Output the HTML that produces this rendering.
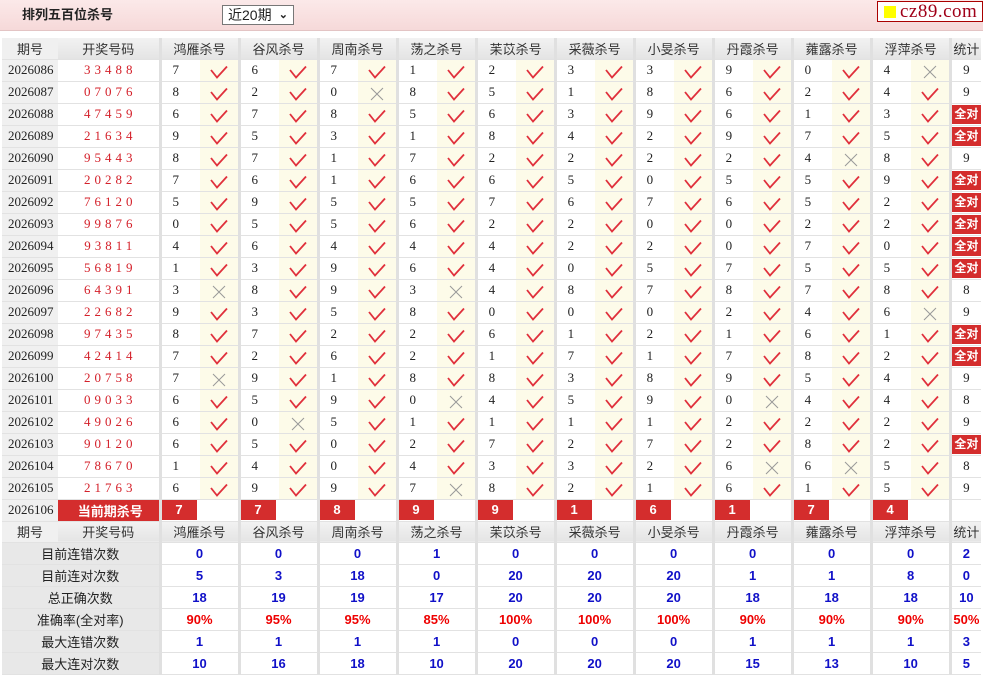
<!DOCTYPE html>
<html><head><meta charset="utf-8"><style>
*{margin:0;padding:0;box-sizing:border-box}
body{width:983px;height:677px;background:#fff;position:relative;overflow:hidden;font-family:"Liberation Sans","Noto Sans CJK SC",sans-serif;font-size:13px;color:#222}
.top{position:absolute;left:0;top:0;width:983px;height:31px;background:linear-gradient(#fbe9e9,#f6d9d9);border-bottom:1px solid #e3c4c4}
.ttl{position:absolute;left:22px;top:6px;font-weight:bold;font-size:13px;color:#222;line-height:18px}
.sel{position:absolute;left:222px;top:5px;width:72px;height:20px;border:1px solid #777;background:#fff;font-size:14px;padding-left:5px;line-height:18px}
.sel b{position:absolute;right:5px;top:0;font-size:11px}
.logo{position:absolute;left:877px;top:1px;width:106px;height:21px;background:#fff;border:1px solid #a00;font-family:"Liberation Serif",serif;font-size:19px;color:#a00018;line-height:19px;padding-left:22px;letter-spacing:0.5px}
.logo i{position:absolute;left:6px;top:4px;width:12px;height:12px;background:#ff0}
table{position:absolute;left:2px;top:38px;width:979px;border-collapse:collapse;table-layout:fixed}
td{height:22px;border-bottom:1px solid #e2e2e2;text-align:center;padding:0;white-space:nowrap;font-family:"Liberation Serif","Noto Serif CJK SC",serif;font-size:13px}
.h td{background:linear-gradient(#f2f2f2,#e4e4e4);font-family:"Liberation Sans","Noto Sans CJK SC",sans-serif;color:#333;height:21px}
td.p{background:#f0f0f0;text-align:left;padding-left:6px}
.h td.p{text-align:center;padding:0}
td.d{color:#d4202a;letter-spacing:4px;padding-left:4px}
td.n{border-left:3px solid #e0e0e0;text-align:left;padding-left:11px}
.h td.n,td.s{border-left:3px solid #e0e0e0}
td.k{background:#fdfbe9}
td.s{text-align:center}
.ok{display:inline-block;width:18px;height:14px;vertical-align:middle;margin-top:2px}
td.q span{display:inline-block;background:#d42d2d;color:#fff;font-weight:bold;font-family:"Liberation Sans","Noto Sans CJK SC",sans-serif;font-size:12px;width:29px;height:19px;line-height:19px}
tr.c td.n{padding:0}
tr.c td.n span{display:block;width:35px;height:20px;background:#d42d2d;color:#fff;font-weight:bold;text-align:center;line-height:20px;font-family:"Liberation Sans",sans-serif}
td.cur{background:#d42d2d;color:#fff;font-weight:bold;font-family:"Liberation Sans","Noto Sans CJK SC",sans-serif;letter-spacing:0}
tr.st td{font-family:"Liberation Sans",sans-serif;font-weight:bold;color:#1010c8;font-size:13px}
tr.st td.l{background:#e8e8e8;font-weight:normal;color:#222;font-family:"Liberation Sans","Noto Sans CJK SC",sans-serif}
tr.st td.g{border-left:3px solid #e0e0e0}
tr.r td.g{color:#e00}
</style></head><body>
<svg width="0" height="0" style="position:absolute"><defs>
<symbol id="y" viewBox="0 0 18 14"><path d="M1 5 L7 12.5 L17 1.5" fill="none" stroke="#e0303c" stroke-width="1.8"/></symbol>
<symbol id="x" viewBox="0 0 18 14"><path d="M3 1 L15 13 M15 1 L3 13" fill="none" stroke="#999" stroke-width="1"/></symbol>
</defs></svg>
<div class="top"><div class="ttl">排列五百位杀号</div><div class="sel">近20期<b>&#8964;</b></div></div>
<div class="logo"><i></i>cz89.com</div>
<table>
<colgroup><col style="width:56px"><col style="width:102px"><col span="20" style="width:39.5px"><col style="width:31px"></colgroup>
<tr class="h"><td class="p">期号</td><td>开奖号码</td><td class="n" colspan="2" style="text-align:center;padding:0">鸿雁杀号</td><td class="n" colspan="2" style="text-align:center;padding:0">谷风杀号</td><td class="n" colspan="2" style="text-align:center;padding:0">周南杀号</td><td class="n" colspan="2" style="text-align:center;padding:0">荡之杀号</td><td class="n" colspan="2" style="text-align:center;padding:0">苿苡杀号</td><td class="n" colspan="2" style="text-align:center;padding:0">采薇杀号</td><td class="n" colspan="2" style="text-align:center;padding:0">小旻杀号</td><td class="n" colspan="2" style="text-align:center;padding:0">丹霞杀号</td><td class="n" colspan="2" style="text-align:center;padding:0">蕹露杀号</td><td class="n" colspan="2" style="text-align:center;padding:0">浮萍杀号</td><td class="s">统计</td></tr>
<tr><td class="p">2026086</td><td class="d">33488</td><td class="n">7</td><td class="k"><svg class="ok"><use href="#y"/></svg></td><td class="n">6</td><td class="k"><svg class="ok"><use href="#y"/></svg></td><td class="n">7</td><td class="k"><svg class="ok"><use href="#y"/></svg></td><td class="n">1</td><td class="k"><svg class="ok"><use href="#y"/></svg></td><td class="n">2</td><td class="k"><svg class="ok"><use href="#y"/></svg></td><td class="n">3</td><td class="k"><svg class="ok"><use href="#y"/></svg></td><td class="n">3</td><td class="k"><svg class="ok"><use href="#y"/></svg></td><td class="n">9</td><td class="k"><svg class="ok"><use href="#y"/></svg></td><td class="n">0</td><td class="k"><svg class="ok"><use href="#y"/></svg></td><td class="n">4</td><td class="k"><svg class="ok"><use href="#x"/></svg></td><td class="s">9</td></tr>
<tr><td class="p">2026087</td><td class="d">07076</td><td class="n">8</td><td class="k"><svg class="ok"><use href="#y"/></svg></td><td class="n">2</td><td class="k"><svg class="ok"><use href="#y"/></svg></td><td class="n">0</td><td class="k"><svg class="ok"><use href="#x"/></svg></td><td class="n">8</td><td class="k"><svg class="ok"><use href="#y"/></svg></td><td class="n">5</td><td class="k"><svg class="ok"><use href="#y"/></svg></td><td class="n">1</td><td class="k"><svg class="ok"><use href="#y"/></svg></td><td class="n">8</td><td class="k"><svg class="ok"><use href="#y"/></svg></td><td class="n">6</td><td class="k"><svg class="ok"><use href="#y"/></svg></td><td class="n">2</td><td class="k"><svg class="ok"><use href="#y"/></svg></td><td class="n">4</td><td class="k"><svg class="ok"><use href="#y"/></svg></td><td class="s">9</td></tr>
<tr><td class="p">2026088</td><td class="d">47459</td><td class="n">6</td><td class="k"><svg class="ok"><use href="#y"/></svg></td><td class="n">7</td><td class="k"><svg class="ok"><use href="#y"/></svg></td><td class="n">8</td><td class="k"><svg class="ok"><use href="#y"/></svg></td><td class="n">5</td><td class="k"><svg class="ok"><use href="#y"/></svg></td><td class="n">6</td><td class="k"><svg class="ok"><use href="#y"/></svg></td><td class="n">3</td><td class="k"><svg class="ok"><use href="#y"/></svg></td><td class="n">9</td><td class="k"><svg class="ok"><use href="#y"/></svg></td><td class="n">6</td><td class="k"><svg class="ok"><use href="#y"/></svg></td><td class="n">1</td><td class="k"><svg class="ok"><use href="#y"/></svg></td><td class="n">3</td><td class="k"><svg class="ok"><use href="#y"/></svg></td><td class="s q"><span>全对</span></td></tr>
<tr><td class="p">2026089</td><td class="d">21634</td><td class="n">9</td><td class="k"><svg class="ok"><use href="#y"/></svg></td><td class="n">5</td><td class="k"><svg class="ok"><use href="#y"/></svg></td><td class="n">3</td><td class="k"><svg class="ok"><use href="#y"/></svg></td><td class="n">1</td><td class="k"><svg class="ok"><use href="#y"/></svg></td><td class="n">8</td><td class="k"><svg class="ok"><use href="#y"/></svg></td><td class="n">4</td><td class="k"><svg class="ok"><use href="#y"/></svg></td><td class="n">2</td><td class="k"><svg class="ok"><use href="#y"/></svg></td><td class="n">9</td><td class="k"><svg class="ok"><use href="#y"/></svg></td><td class="n">7</td><td class="k"><svg class="ok"><use href="#y"/></svg></td><td class="n">5</td><td class="k"><svg class="ok"><use href="#y"/></svg></td><td class="s q"><span>全对</span></td></tr>
<tr><td class="p">2026090</td><td class="d">95443</td><td class="n">8</td><td class="k"><svg class="ok"><use href="#y"/></svg></td><td class="n">7</td><td class="k"><svg class="ok"><use href="#y"/></svg></td><td class="n">1</td><td class="k"><svg class="ok"><use href="#y"/></svg></td><td class="n">7</td><td class="k"><svg class="ok"><use href="#y"/></svg></td><td class="n">2</td><td class="k"><svg class="ok"><use href="#y"/></svg></td><td class="n">2</td><td class="k"><svg class="ok"><use href="#y"/></svg></td><td class="n">2</td><td class="k"><svg class="ok"><use href="#y"/></svg></td><td class="n">2</td><td class="k"><svg class="ok"><use href="#y"/></svg></td><td class="n">4</td><td class="k"><svg class="ok"><use href="#x"/></svg></td><td class="n">8</td><td class="k"><svg class="ok"><use href="#y"/></svg></td><td class="s">9</td></tr>
<tr><td class="p">2026091</td><td class="d">20282</td><td class="n">7</td><td class="k"><svg class="ok"><use href="#y"/></svg></td><td class="n">6</td><td class="k"><svg class="ok"><use href="#y"/></svg></td><td class="n">1</td><td class="k"><svg class="ok"><use href="#y"/></svg></td><td class="n">6</td><td class="k"><svg class="ok"><use href="#y"/></svg></td><td class="n">6</td><td class="k"><svg class="ok"><use href="#y"/></svg></td><td class="n">5</td><td class="k"><svg class="ok"><use href="#y"/></svg></td><td class="n">0</td><td class="k"><svg class="ok"><use href="#y"/></svg></td><td class="n">5</td><td class="k"><svg class="ok"><use href="#y"/></svg></td><td class="n">5</td><td class="k"><svg class="ok"><use href="#y"/></svg></td><td class="n">9</td><td class="k"><svg class="ok"><use href="#y"/></svg></td><td class="s q"><span>全对</span></td></tr>
<tr><td class="p">2026092</td><td class="d">76120</td><td class="n">5</td><td class="k"><svg class="ok"><use href="#y"/></svg></td><td class="n">9</td><td class="k"><svg class="ok"><use href="#y"/></svg></td><td class="n">5</td><td class="k"><svg class="ok"><use href="#y"/></svg></td><td class="n">5</td><td class="k"><svg class="ok"><use href="#y"/></svg></td><td class="n">7</td><td class="k"><svg class="ok"><use href="#y"/></svg></td><td class="n">6</td><td class="k"><svg class="ok"><use href="#y"/></svg></td><td class="n">7</td><td class="k"><svg class="ok"><use href="#y"/></svg></td><td class="n">6</td><td class="k"><svg class="ok"><use href="#y"/></svg></td><td class="n">5</td><td class="k"><svg class="ok"><use href="#y"/></svg></td><td class="n">2</td><td class="k"><svg class="ok"><use href="#y"/></svg></td><td class="s q"><span>全对</span></td></tr>
<tr><td class="p">2026093</td><td class="d">99876</td><td class="n">0</td><td class="k"><svg class="ok"><use href="#y"/></svg></td><td class="n">5</td><td class="k"><svg class="ok"><use href="#y"/></svg></td><td class="n">5</td><td class="k"><svg class="ok"><use href="#y"/></svg></td><td class="n">6</td><td class="k"><svg class="ok"><use href="#y"/></svg></td><td class="n">2</td><td class="k"><svg class="ok"><use href="#y"/></svg></td><td class="n">2</td><td class="k"><svg class="ok"><use href="#y"/></svg></td><td class="n">0</td><td class="k"><svg class="ok"><use href="#y"/></svg></td><td class="n">0</td><td class="k"><svg class="ok"><use href="#y"/></svg></td><td class="n">2</td><td class="k"><svg class="ok"><use href="#y"/></svg></td><td class="n">2</td><td class="k"><svg class="ok"><use href="#y"/></svg></td><td class="s q"><span>全对</span></td></tr>
<tr><td class="p">2026094</td><td class="d">93811</td><td class="n">4</td><td class="k"><svg class="ok"><use href="#y"/></svg></td><td class="n">6</td><td class="k"><svg class="ok"><use href="#y"/></svg></td><td class="n">4</td><td class="k"><svg class="ok"><use href="#y"/></svg></td><td class="n">4</td><td class="k"><svg class="ok"><use href="#y"/></svg></td><td class="n">4</td><td class="k"><svg class="ok"><use href="#y"/></svg></td><td class="n">2</td><td class="k"><svg class="ok"><use href="#y"/></svg></td><td class="n">2</td><td class="k"><svg class="ok"><use href="#y"/></svg></td><td class="n">0</td><td class="k"><svg class="ok"><use href="#y"/></svg></td><td class="n">7</td><td class="k"><svg class="ok"><use href="#y"/></svg></td><td class="n">0</td><td class="k"><svg class="ok"><use href="#y"/></svg></td><td class="s q"><span>全对</span></td></tr>
<tr><td class="p">2026095</td><td class="d">56819</td><td class="n">1</td><td class="k"><svg class="ok"><use href="#y"/></svg></td><td class="n">3</td><td class="k"><svg class="ok"><use href="#y"/></svg></td><td class="n">9</td><td class="k"><svg class="ok"><use href="#y"/></svg></td><td class="n">6</td><td class="k"><svg class="ok"><use href="#y"/></svg></td><td class="n">4</td><td class="k"><svg class="ok"><use href="#y"/></svg></td><td class="n">0</td><td class="k"><svg class="ok"><use href="#y"/></svg></td><td class="n">5</td><td class="k"><svg class="ok"><use href="#y"/></svg></td><td class="n">7</td><td class="k"><svg class="ok"><use href="#y"/></svg></td><td class="n">5</td><td class="k"><svg class="ok"><use href="#y"/></svg></td><td class="n">5</td><td class="k"><svg class="ok"><use href="#y"/></svg></td><td class="s q"><span>全对</span></td></tr>
<tr><td class="p">2026096</td><td class="d">64391</td><td class="n">3</td><td class="k"><svg class="ok"><use href="#x"/></svg></td><td class="n">8</td><td class="k"><svg class="ok"><use href="#y"/></svg></td><td class="n">9</td><td class="k"><svg class="ok"><use href="#y"/></svg></td><td class="n">3</td><td class="k"><svg class="ok"><use href="#x"/></svg></td><td class="n">4</td><td class="k"><svg class="ok"><use href="#y"/></svg></td><td class="n">8</td><td class="k"><svg class="ok"><use href="#y"/></svg></td><td class="n">7</td><td class="k"><svg class="ok"><use href="#y"/></svg></td><td class="n">8</td><td class="k"><svg class="ok"><use href="#y"/></svg></td><td class="n">7</td><td class="k"><svg class="ok"><use href="#y"/></svg></td><td class="n">8</td><td class="k"><svg class="ok"><use href="#y"/></svg></td><td class="s">8</td></tr>
<tr><td class="p">2026097</td><td class="d">22682</td><td class="n">9</td><td class="k"><svg class="ok"><use href="#y"/></svg></td><td class="n">3</td><td class="k"><svg class="ok"><use href="#y"/></svg></td><td class="n">5</td><td class="k"><svg class="ok"><use href="#y"/></svg></td><td class="n">8</td><td class="k"><svg class="ok"><use href="#y"/></svg></td><td class="n">0</td><td class="k"><svg class="ok"><use href="#y"/></svg></td><td class="n">0</td><td class="k"><svg class="ok"><use href="#y"/></svg></td><td class="n">0</td><td class="k"><svg class="ok"><use href="#y"/></svg></td><td class="n">2</td><td class="k"><svg class="ok"><use href="#y"/></svg></td><td class="n">4</td><td class="k"><svg class="ok"><use href="#y"/></svg></td><td class="n">6</td><td class="k"><svg class="ok"><use href="#x"/></svg></td><td class="s">9</td></tr>
<tr><td class="p">2026098</td><td class="d">97435</td><td class="n">8</td><td class="k"><svg class="ok"><use href="#y"/></svg></td><td class="n">7</td><td class="k"><svg class="ok"><use href="#y"/></svg></td><td class="n">2</td><td class="k"><svg class="ok"><use href="#y"/></svg></td><td class="n">2</td><td class="k"><svg class="ok"><use href="#y"/></svg></td><td class="n">6</td><td class="k"><svg class="ok"><use href="#y"/></svg></td><td class="n">1</td><td class="k"><svg class="ok"><use href="#y"/></svg></td><td class="n">2</td><td class="k"><svg class="ok"><use href="#y"/></svg></td><td class="n">1</td><td class="k"><svg class="ok"><use href="#y"/></svg></td><td class="n">6</td><td class="k"><svg class="ok"><use href="#y"/></svg></td><td class="n">1</td><td class="k"><svg class="ok"><use href="#y"/></svg></td><td class="s q"><span>全对</span></td></tr>
<tr><td class="p">2026099</td><td class="d">42414</td><td class="n">7</td><td class="k"><svg class="ok"><use href="#y"/></svg></td><td class="n">2</td><td class="k"><svg class="ok"><use href="#y"/></svg></td><td class="n">6</td><td class="k"><svg class="ok"><use href="#y"/></svg></td><td class="n">2</td><td class="k"><svg class="ok"><use href="#y"/></svg></td><td class="n">1</td><td class="k"><svg class="ok"><use href="#y"/></svg></td><td class="n">7</td><td class="k"><svg class="ok"><use href="#y"/></svg></td><td class="n">1</td><td class="k"><svg class="ok"><use href="#y"/></svg></td><td class="n">7</td><td class="k"><svg class="ok"><use href="#y"/></svg></td><td class="n">8</td><td class="k"><svg class="ok"><use href="#y"/></svg></td><td class="n">2</td><td class="k"><svg class="ok"><use href="#y"/></svg></td><td class="s q"><span>全对</span></td></tr>
<tr><td class="p">2026100</td><td class="d">20758</td><td class="n">7</td><td class="k"><svg class="ok"><use href="#x"/></svg></td><td class="n">9</td><td class="k"><svg class="ok"><use href="#y"/></svg></td><td class="n">1</td><td class="k"><svg class="ok"><use href="#y"/></svg></td><td class="n">8</td><td class="k"><svg class="ok"><use href="#y"/></svg></td><td class="n">8</td><td class="k"><svg class="ok"><use href="#y"/></svg></td><td class="n">3</td><td class="k"><svg class="ok"><use href="#y"/></svg></td><td class="n">8</td><td class="k"><svg class="ok"><use href="#y"/></svg></td><td class="n">9</td><td class="k"><svg class="ok"><use href="#y"/></svg></td><td class="n">5</td><td class="k"><svg class="ok"><use href="#y"/></svg></td><td class="n">4</td><td class="k"><svg class="ok"><use href="#y"/></svg></td><td class="s">9</td></tr>
<tr><td class="p">2026101</td><td class="d">09033</td><td class="n">6</td><td class="k"><svg class="ok"><use href="#y"/></svg></td><td class="n">5</td><td class="k"><svg class="ok"><use href="#y"/></svg></td><td class="n">9</td><td class="k"><svg class="ok"><use href="#y"/></svg></td><td class="n">0</td><td class="k"><svg class="ok"><use href="#x"/></svg></td><td class="n">4</td><td class="k"><svg class="ok"><use href="#y"/></svg></td><td class="n">5</td><td class="k"><svg class="ok"><use href="#y"/></svg></td><td class="n">9</td><td class="k"><svg class="ok"><use href="#y"/></svg></td><td class="n">0</td><td class="k"><svg class="ok"><use href="#x"/></svg></td><td class="n">4</td><td class="k"><svg class="ok"><use href="#y"/></svg></td><td class="n">4</td><td class="k"><svg class="ok"><use href="#y"/></svg></td><td class="s">8</td></tr>
<tr><td class="p">2026102</td><td class="d">49026</td><td class="n">6</td><td class="k"><svg class="ok"><use href="#y"/></svg></td><td class="n">0</td><td class="k"><svg class="ok"><use href="#x"/></svg></td><td class="n">5</td><td class="k"><svg class="ok"><use href="#y"/></svg></td><td class="n">1</td><td class="k"><svg class="ok"><use href="#y"/></svg></td><td class="n">1</td><td class="k"><svg class="ok"><use href="#y"/></svg></td><td class="n">1</td><td class="k"><svg class="ok"><use href="#y"/></svg></td><td class="n">1</td><td class="k"><svg class="ok"><use href="#y"/></svg></td><td class="n">2</td><td class="k"><svg class="ok"><use href="#y"/></svg></td><td class="n">2</td><td class="k"><svg class="ok"><use href="#y"/></svg></td><td class="n">2</td><td class="k"><svg class="ok"><use href="#y"/></svg></td><td class="s">9</td></tr>
<tr><td class="p">2026103</td><td class="d">90120</td><td class="n">6</td><td class="k"><svg class="ok"><use href="#y"/></svg></td><td class="n">5</td><td class="k"><svg class="ok"><use href="#y"/></svg></td><td class="n">0</td><td class="k"><svg class="ok"><use href="#y"/></svg></td><td class="n">2</td><td class="k"><svg class="ok"><use href="#y"/></svg></td><td class="n">7</td><td class="k"><svg class="ok"><use href="#y"/></svg></td><td class="n">2</td><td class="k"><svg class="ok"><use href="#y"/></svg></td><td class="n">7</td><td class="k"><svg class="ok"><use href="#y"/></svg></td><td class="n">2</td><td class="k"><svg class="ok"><use href="#y"/></svg></td><td class="n">8</td><td class="k"><svg class="ok"><use href="#y"/></svg></td><td class="n">2</td><td class="k"><svg class="ok"><use href="#y"/></svg></td><td class="s q"><span>全对</span></td></tr>
<tr><td class="p">2026104</td><td class="d">78670</td><td class="n">1</td><td class="k"><svg class="ok"><use href="#y"/></svg></td><td class="n">4</td><td class="k"><svg class="ok"><use href="#y"/></svg></td><td class="n">0</td><td class="k"><svg class="ok"><use href="#y"/></svg></td><td class="n">4</td><td class="k"><svg class="ok"><use href="#y"/></svg></td><td class="n">3</td><td class="k"><svg class="ok"><use href="#y"/></svg></td><td class="n">3</td><td class="k"><svg class="ok"><use href="#y"/></svg></td><td class="n">2</td><td class="k"><svg class="ok"><use href="#y"/></svg></td><td class="n">6</td><td class="k"><svg class="ok"><use href="#x"/></svg></td><td class="n">6</td><td class="k"><svg class="ok"><use href="#x"/></svg></td><td class="n">5</td><td class="k"><svg class="ok"><use href="#y"/></svg></td><td class="s">8</td></tr>
<tr><td class="p">2026105</td><td class="d">21763</td><td class="n">6</td><td class="k"><svg class="ok"><use href="#y"/></svg></td><td class="n">9</td><td class="k"><svg class="ok"><use href="#y"/></svg></td><td class="n">9</td><td class="k"><svg class="ok"><use href="#y"/></svg></td><td class="n">7</td><td class="k"><svg class="ok"><use href="#x"/></svg></td><td class="n">8</td><td class="k"><svg class="ok"><use href="#y"/></svg></td><td class="n">2</td><td class="k"><svg class="ok"><use href="#y"/></svg></td><td class="n">1</td><td class="k"><svg class="ok"><use href="#y"/></svg></td><td class="n">6</td><td class="k"><svg class="ok"><use href="#y"/></svg></td><td class="n">1</td><td class="k"><svg class="ok"><use href="#y"/></svg></td><td class="n">5</td><td class="k"><svg class="ok"><use href="#y"/></svg></td><td class="s">9</td></tr>
<tr class="c"><td class="p">2026106</td><td class="d cur">当前期杀号</td><td class="n"><span>7</span></td><td></td><td class="n"><span>7</span></td><td></td><td class="n"><span>8</span></td><td></td><td class="n"><span>9</span></td><td></td><td class="n"><span>9</span></td><td></td><td class="n"><span>1</span></td><td></td><td class="n"><span>6</span></td><td></td><td class="n"><span>1</span></td><td></td><td class="n"><span>7</span></td><td></td><td class="n"><span>4</span></td><td></td><td class="s"></td></tr>
<tr class="h"><td class="p">期号</td><td>开奖号码</td><td class="n" colspan="2" style="text-align:center;padding:0">鸿雁杀号</td><td class="n" colspan="2" style="text-align:center;padding:0">谷风杀号</td><td class="n" colspan="2" style="text-align:center;padding:0">周南杀号</td><td class="n" colspan="2" style="text-align:center;padding:0">荡之杀号</td><td class="n" colspan="2" style="text-align:center;padding:0">苿苡杀号</td><td class="n" colspan="2" style="text-align:center;padding:0">采薇杀号</td><td class="n" colspan="2" style="text-align:center;padding:0">小旻杀号</td><td class="n" colspan="2" style="text-align:center;padding:0">丹霞杀号</td><td class="n" colspan="2" style="text-align:center;padding:0">蕹露杀号</td><td class="n" colspan="2" style="text-align:center;padding:0">浮萍杀号</td><td class="s">统计</td></tr>
<tr class="st"><td class="l" colspan="2">目前连错次数</td><td class="g" colspan="2">0</td><td class="g" colspan="2">0</td><td class="g" colspan="2">0</td><td class="g" colspan="2">1</td><td class="g" colspan="2">0</td><td class="g" colspan="2">0</td><td class="g" colspan="2">0</td><td class="g" colspan="2">0</td><td class="g" colspan="2">0</td><td class="g" colspan="2">0</td><td class="g">2</td></tr>
<tr class="st"><td class="l" colspan="2">目前连对次数</td><td class="g" colspan="2">5</td><td class="g" colspan="2">3</td><td class="g" colspan="2">18</td><td class="g" colspan="2">0</td><td class="g" colspan="2">20</td><td class="g" colspan="2">20</td><td class="g" colspan="2">20</td><td class="g" colspan="2">1</td><td class="g" colspan="2">1</td><td class="g" colspan="2">8</td><td class="g">0</td></tr>
<tr class="st"><td class="l" colspan="2">总正确次数</td><td class="g" colspan="2">18</td><td class="g" colspan="2">19</td><td class="g" colspan="2">19</td><td class="g" colspan="2">17</td><td class="g" colspan="2">20</td><td class="g" colspan="2">20</td><td class="g" colspan="2">20</td><td class="g" colspan="2">18</td><td class="g" colspan="2">18</td><td class="g" colspan="2">18</td><td class="g">10</td></tr>
<tr class="st r"><td class="l" colspan="2">准确率(全对率)</td><td class="g" colspan="2">90%</td><td class="g" colspan="2">95%</td><td class="g" colspan="2">95%</td><td class="g" colspan="2">85%</td><td class="g" colspan="2">100%</td><td class="g" colspan="2">100%</td><td class="g" colspan="2">100%</td><td class="g" colspan="2">90%</td><td class="g" colspan="2">90%</td><td class="g" colspan="2">90%</td><td class="g">50%</td></tr>
<tr class="st"><td class="l" colspan="2">最大连错次数</td><td class="g" colspan="2">1</td><td class="g" colspan="2">1</td><td class="g" colspan="2">1</td><td class="g" colspan="2">1</td><td class="g" colspan="2">0</td><td class="g" colspan="2">0</td><td class="g" colspan="2">0</td><td class="g" colspan="2">1</td><td class="g" colspan="2">1</td><td class="g" colspan="2">1</td><td class="g">3</td></tr>
<tr class="st"><td class="l" colspan="2">最大连对次数</td><td class="g" colspan="2">10</td><td class="g" colspan="2">16</td><td class="g" colspan="2">18</td><td class="g" colspan="2">10</td><td class="g" colspan="2">20</td><td class="g" colspan="2">20</td><td class="g" colspan="2">20</td><td class="g" colspan="2">15</td><td class="g" colspan="2">13</td><td class="g" colspan="2">10</td><td class="g">5</td></tr>
</table>
</body></html>
